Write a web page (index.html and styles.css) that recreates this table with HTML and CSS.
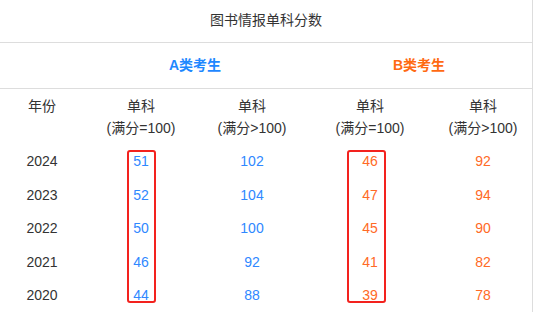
FILE: index.html
```html
<!DOCTYPE html>
<html lang="zh">
<head>
<meta charset="utf-8">
<link rel="stylesheet" href="styles.css">
</head>
<body>
<div class="wrap">
  <div class="title">图书情报单科分数</div>
  <table class="scores">
    <colgroup>
      <col class="c1"><col class="c2"><col class="c3"><col class="c4"><col class="c5">
    </colgroup>
    <tr class="group">
      <td></td>
      <td colspan="2" class="a">A类考生</td>
      <td colspan="2" class="b">B类考生</td>
    </tr>
    <tr class="head">
      <td>年份<br>&nbsp;</td>
      <td>单科<br>(满分=100)</td>
      <td>单科<br>(满分&gt;100)</td>
      <td>单科<br>(满分=100)</td>
      <td>单科<br>(满分&gt;100)</td>
    </tr>
    <tr><td class="yr">2024</td><td class="a-n">51</td><td class="a-n">102</td><td class="b-n">46</td><td class="b-n">92</td></tr>
    <tr><td class="yr">2023</td><td class="a-n">52</td><td class="a-n">104</td><td class="b-n">47</td><td class="b-n">94</td></tr>
    <tr><td class="yr">2022</td><td class="a-n">50</td><td class="a-n">100</td><td class="b-n">45</td><td class="b-n">90</td></tr>
    <tr><td class="yr">2021</td><td class="a-n">46</td><td class="a-n">92</td><td class="b-n">41</td><td class="b-n">82</td></tr>
    <tr><td class="yr">2020</td><td class="a-n">44</td><td class="a-n">88</td><td class="b-n">39</td><td class="b-n">78</td></tr>
  </table>
  <div class="mark mark-a"></div>
  <div class="mark mark-b"></div>
</div>
</body>
</html>
```
FILE: styles.css
```css
html, body {
  margin: 0;
  padding: 0;
  background: #fff;
}
body {
  font-family: "Liberation Sans", "Noto Sans CJK SC", sans-serif;
  font-size: 14px;
  color: #333;
}
.wrap {
  position: relative;
  width: 532px;
  height: 312px;
  border-right: 1px solid #ddd;
  overflow: hidden;
}
.title {
  height: 42px;
  line-height: 40px;
  text-align: center;
  border-bottom: 1px solid #ddd;
}
.scores {
  width: 532px;
  table-layout: fixed;
  border-collapse: collapse;
}
.c1 { width: 84px; }
.c2 { width: 114px; }
.c3 { width: 108px; }
.c4 { width: 128px; }
.c5 { width: 98px; }
.scores td {
  text-align: center;
  padding: 5.5px 0;
  line-height: 22.4px;
}
.group td {
  height: 45px;
  padding: 0;
  border-bottom: 1px solid #ddd;
  font-weight: bold;
}
.group .a { color: #1e88ff; }
.group .b { color: #ff6a12; }
.head td { vertical-align: top; }
.a-n { color: #2f88ff; }
.b-n { color: #ff6a26; }
.mark {
  position: absolute;
  top: 150px;
  height: 149px;
  border: 2px solid #f3221e;
  border-radius: 3px;
}
.mark-a { left: 127px; width: 25px; }
.mark-b { left: 347px; width: 35px; }
```
